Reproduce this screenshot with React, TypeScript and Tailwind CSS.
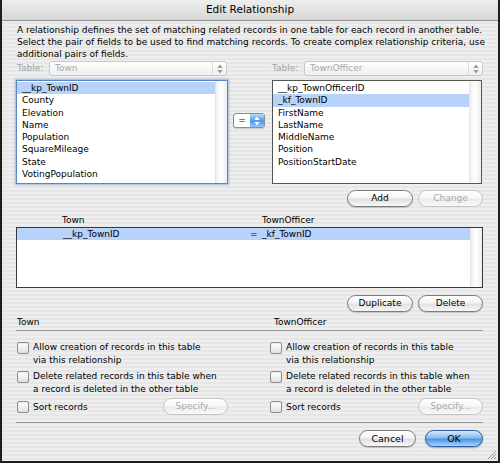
import React from 'react';

const townFields = ['__kp_TownID', 'County', 'Elevation', 'Name', 'Population', 'SquareMileage', 'State', 'VotingPopulation'];
const officerFields = ['__kp_TownOfficerID', '_kf_TownID', 'FirstName', 'LastName', 'MiddleName', 'Position', 'PositionStartDate'];

function UpDown({ color = '#8a8a8a' }: { color?: string }) {
  return (
    <svg width="6" height="10" viewBox="0 0 6 10">
      <path d="M3 0.5 L5.6 4 L0.4 4 Z" fill={color} />
      <path d="M3 9.5 L5.6 6 L0.4 6 Z" fill={color} />
    </svg>
  );
}

function AquaButton({ label, className = '', disabled = false, primary = false }: { label: string; className?: string; disabled?: boolean; primary?: boolean }) {
  let look = 'border-[#7b7b7b] text-black bg-[image:linear-gradient(180deg,#ffffff_0%,#f4f4f4_45%,#e1e1e1_55%,#f7f7f7_100%)] shadow-[0_1px_1px_rgba(0,0,0,0.18)]';
  if (disabled) look = 'border-[#c4c4c4] text-[#a8a8a8] bg-[image:linear-gradient(180deg,#ffffff_0%,#f7f7f7_45%,#ececec_55%,#f9f9f9_100%)]';
  if (primary) look = 'border-[#2d5b9e] text-black bg-[image:linear-gradient(180deg,#d6eafc_0%,#86bdf1_45%,#4d95e4_55%,#a6d6ff_100%)] shadow-[0_1px_2px_rgba(0,0,0,0.3)]';
  return (
    <div className={`h-[17px] flex items-center justify-center rounded-full border leading-none ${look} ${className}`}>
      {label}
    </div>
  );
}

function Checkbox() {
  return (
    <div className="w-[12px] h-[12px] shrink-0 rounded-[2px] border border-[#8e8e8e] bg-[image:linear-gradient(180deg,#ffffff_0%,#f1f1f1_50%,#dedede_100%)] shadow-[inset_0_1px_1px_rgba(0,0,0,0.08)]" />
  );
}

function TablePopup({ name }: { name: string }) {
  return (
    <div className="flex items-center h-[15px]">
      <span className="w-[32px] text-[#a2a2a2]">Table:</span>
      <div className="flex-1 h-[15px] flex items-center rounded-[3px] border border-[#c8c8c8] bg-[image:linear-gradient(180deg,#ffffff,#efefef)]">
        <span className="flex-1 pl-[5px] text-[#a6a6a6]">{name}</span>
        <span className="w-[14px] h-full flex items-center justify-center border-l border-[#dadada]">
          <UpDown color="#9a9a9a" />
        </span>
      </div>
    </div>
  );
}

function ScrollStrip() {
  return <div className="w-[12px] shrink-0 border-l border-[#e4e4e4] bg-[image:linear-gradient(90deg,#efefef,#ffffff_45%,#ececec)]" />;
}

function FieldList({ items, selected, focused = false }: { items: string[]; selected: number; focused?: boolean }) {
  return (
    <div className={`mt-[4px] h-[104px] flex bg-white border ${focused ? 'border-[#5a86c6] shadow-[0_0_2px_1px_rgba(90,140,210,0.55)]' : 'border-[#555]'}`}>
      <div className="flex-1 pt-[1px]">
        {items.map((f, i) => (
          <div key={f} className={`h-[12.3px] leading-[12.3px] pl-[5px] ${i === selected ? 'bg-[#b7d3fa]' : ''}`}>{f}</div>
        ))}
      </div>
      <ScrollStrip />
    </div>
  );
}

function OptionColumn({ width }: { width: string }) {
  return (
    <div className={`flex flex-col ${width}`}>
      <div className="flex gap-[4px] leading-[13px]">
        <div className="pt-[1px]"><Checkbox /></div>
        <div>Allow creation of records in this table<br />via this relationship</div>
      </div>
      <div className="flex gap-[4px] leading-[13px] mt-[3px]">
        <div className="pt-[1px]"><Checkbox /></div>
        <div>Delete related records in this table when<br />a record is deleted in the other table</div>
      </div>
      <div className="flex items-center h-[17px] mt-[2px]">
        <Checkbox />
        <span className="ml-[4px] flex-1 pt-[2px]">Sort records</span>
        <AquaButton label="Specify..." disabled className="w-[65px]" />
      </div>
    </div>
  );
}

export default function App() {
  return (
    <div className="relative w-[500px] h-[463px] overflow-hidden flex flex-col border-x-2 border-b-2 border-[#1e1e1e] bg-[image:repeating-linear-gradient(180deg,#eeeeee_0px,#eeeeee_2px,#e6e6e6_2px,#e6e6e6_4px)] font-['DejaVu_Sans',sans-serif] text-[9px] text-black">
      {/* title bar */}
      <div className="h-[21px] shrink-0 flex items-center justify-center border-b border-[#8f8f8f] bg-[image:linear-gradient(180deg,#eeeeee,#d6d6d6)] text-[10.5px]">
        Edit Relationship
      </div>

      <div className="pl-[14px] pr-[15px] flex flex-col">
        <p className="pt-[3px] mb-[1px] pl-[1px] leading-[12px] whitespace-nowrap">
          A relationship defines the set of matching related records in one table for each record in another table.<br />
          Select the pair of fields to be used to find matching records. To create complex relationship criteria, use<br />
          additional pairs of fields.
        </p>

        {/* field pickers */}
        <div className="grid grid-cols-[212px_44px_1fr]">
          <div className="flex flex-col pl-[1px]">
            <div className="pr-[1px]"><TablePopup name="Town" /></div>
            <div className="-ml-[1px]"><FieldList items={townFields} selected={0} focused /></div>
          </div>
          <div className="pt-[52px] pl-[5px]">
            <div className="w-[32px] h-[15px] flex rounded-[3px] border border-[#8d8d8d] overflow-hidden bg-white shadow-[0_1px_1px_rgba(0,0,0,0.15)]">
              <span className="flex-1 flex items-center justify-center">=</span>
              <span className="w-[14px] flex items-center justify-center bg-[image:linear-gradient(180deg,#b9dafb,#4f97e6_55%,#8cc7fb)]">
                <UpDown color="#ffffff" />
              </span>
            </div>
          </div>
          <div className="flex flex-col">
            <TablePopup name="TownOfficer" />
            <div className="pr-[1px]"><FieldList items={officerFields} selected={1} /></div>
          </div>
        </div>

        <div className="flex justify-end gap-[5px] mt-[6px]">
          <AquaButton label="Add" className="w-[66px]" />
          <AquaButton label="Change" disabled className="w-[65px]" />
        </div>

        {/* relationship list */}
        <div className="flex mt-[7px] h-[12px] leading-[12px]">
          <span className="ml-[46px] w-[200px]">Town</span>
          <span>TownOfficer</span>
        </div>
        <div className="mt-[1px] h-[61px] flex bg-white border border-[#3a3a3a]">
          <div className="flex-1">
            <div className="flex h-[12.3px] leading-[12.3px] bg-[#b7d3fa]">
              <span className="ml-[46px] w-[187px]">__kp_TownID</span>
              <span className="w-[12px]">=</span>
              <span>_kf_TownID</span>
            </div>
          </div>
          <ScrollStrip />
        </div>

        <div className="flex justify-end gap-[5px] mt-[7px]">
          <AquaButton label="Duplicate" className="w-[66px]" />
          <AquaButton label="Delete" className="w-[65px]" />
        </div>

        {/* options */}
        <div className="grid grid-cols-[257px_1fr] mt-[4px] pb-[2px] pl-[1px] leading-[12px] border-b border-[#9a9a9a]">
          <span>Town</span>
          <span>TownOfficer</span>
        </div>
        <div className="grid grid-cols-[253px_213px] pl-[1px] mt-[10px]">
          <OptionColumn width="w-[211px]" />
          <OptionColumn width="w-[213px]" />
        </div>

        <div className="mt-[7px] border-t border-[#9a9a9a]" />
        <div className="flex justify-end gap-[9px] mt-[7px]">
          <AquaButton label="Cancel" className="w-[57px] text-[9.5px]" />
          <AquaButton label="OK" primary className="w-[58px] text-[9.5px]" />
        </div>
      </div>

      {/* resize grip */}
      <svg className="absolute right-[1px] bottom-[1px]" width="11" height="11" viewBox="0 0 11 11">
        <path d="M10 2 L2 10 M10 5 L5 10 M10 8 L8 10" stroke="#9a9a9a" strokeWidth="1" />
      </svg>
    </div>
  );
}
